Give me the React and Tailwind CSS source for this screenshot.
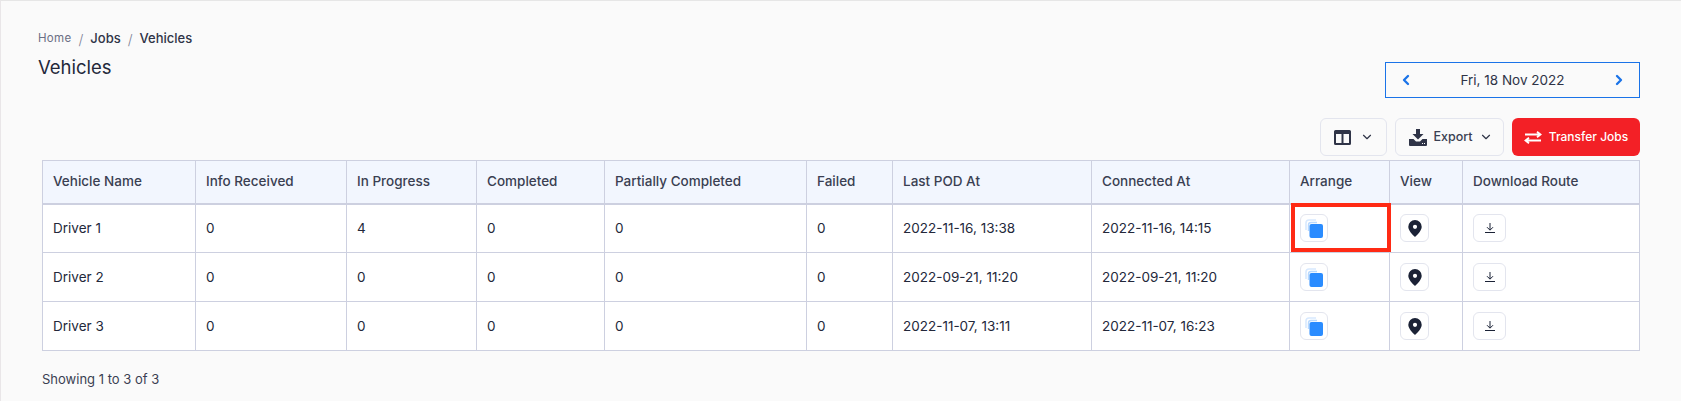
import React from 'react';
import { ChevronLeft, ChevronRight, ChevronDown } from 'lucide-react';

const rows = [
  { name: 'Driver 1', info: 0, progress: 4, completed: 0, partial: 0, failed: 0, pod: '2022-11-16, 13:38', connected: '2022-11-16, 14:15' },
  { name: 'Driver 2', info: 0, progress: 0, completed: 0, partial: 0, failed: 0, pod: '2022-09-21, 11:20', connected: '2022-09-21, 11:20' },
  { name: 'Driver 3', info: 0, progress: 0, completed: 0, partial: 0, failed: 0, pod: '2022-11-07, 13:11', connected: '2022-11-07, 16:23' },
];

const headers = [
  ['Vehicle Name', 'w-[153px]'],
  ['Info Received', 'w-[151px]'],
  ['In Progress', 'w-[130px]'],
  ['Completed', 'w-[128px]'],
  ['Partially Completed', 'w-[202px]'],
  ['Failed', 'w-[86px]'],
  ['Last POD At', 'w-[199px]'],
  ['Connected At', 'w-[198px]'],
  ['Arrange', 'w-[100px]'],
  ['View', 'w-[73px]'],
  ['Download Route', 'w-[177px]'],
];

const ArrangeIcon = () => (
  <svg width="18" height="19" viewBox="0 0 18 19">
    <path d="M1 11V4a3 3 0 0 1 3-3h7" fill="none" stroke="#d8e9fe" strokeWidth="1.6" />
    <path d="M3.500 12V6a2.500 2.500 0 0 1 2.500-2.500h6" fill="none" stroke="#b9d9fd" strokeWidth="1.4" />
    <rect x="4.500" y="5" width="13.500" height="14" rx="2" fill="#2a8cff" />
  </svg>
);

const PinIcon = () => (
  <svg width="14" height="17" viewBox="0 0 14 17">
    <path fillRule="evenodd" d="M7 0a6.700 6.700 0 0 1 6.700 6.700C13.700 10.500 9.500 14.500 7 17 4.500 14.500.3 10.500.3 6.700A6.700 6.700 0 0 1 7 0zm0 4.700a2.100 2.100 0 1 0 0 4.200 2.100 2.100 0 0 0 0-4.200z" fill="#1b2236" />
  </svg>
);

const DownloadIcon = () => (
  <svg width="10" height="10" viewBox="0 0 10 10" fill="none" stroke="#1b2236" strokeWidth="1">
    <path d="M5 0v7M2 4.200 5 7.200l3-3M0 9.500h10" />
  </svg>
);

const ColumnsIcon = () => (
  <svg width="17" height="15" viewBox="0 0 17 15">
    <path fillRule="evenodd" d="M1.500 0h14A1.500 1.500 0 0 1 17 1.500v12a1.500 1.500 0 0 1-1.500 1.500h-14A1.500 1.500 0 0 1 0 13.500v-12A1.500 1.500 0 0 1 1.500 0zM2 4v9h5.500V4zm7.500 0v9H15V4z" fill="#2f3447" />
  </svg>
);

const ExportIcon = () => (
  <svg width="18" height="17" viewBox="0 0 18 17">
    <path d="M7 0h4v5h3.500L9 10.500 3.500 5H7z" fill="#2f3447" />
    <path d="M0 10h4.500L7 12.500h4L13.500 10H18v6a1 1 0 0 1-1 1H1a1 1 0 0 1-1-1z" fill="#2f3447" />
    <path d="M13 14.500h1M15 14.500h1" stroke="#fff" strokeWidth="1" />
  </svg>
);

const TransferIcon = () => (
  <svg width="18" height="13" viewBox="0 0 18 13" fill="none" stroke="#fff" strokeWidth="1.800">
    <path d="M1 3.500h15M13 .8l3.500 2.700L13 6.200M17 9.500H2M5 6.800 1.500 9.500 5 12.200" />
  </svg>
);

const TableButton = ({ className, children }) => (
  <div className={`flex h-[28px] items-center justify-center rounded-md border border-[#e3e5ee] bg-white ${className}`}>
    {children}
  </div>
);

export default function App() {
  return (
    <div className="h-[401px] w-[1681px] overflow-hidden border-l border-t border-l-[#e9e6e8] border-t-[#e6e6e6] bg-[#fafafa] pl-[37px] pr-[41px] pt-[32px] font-['Inter',sans-serif] text-[#1f2433]">
      <div className="flex items-start justify-between">
        <div>
          <div className="flex h-[12px] items-center text-[14px]">
            <span className="text-[11.500px] tracking-[0.3px] text-[#6b6f85]">Home</span>
            <span className="mx-[7px] font-light text-[#7d8196]">/</span>
            <span className="text-[13px] font-medium text-[#2f3447]">Jobs</span>
            <span className="mx-[7px] font-light text-[#7d8196]">/</span>
            <span className="text-[13px] font-medium text-[#2f3447]">Vehicles</span>
          </div>
          <h1 className="mt-[11px] text-[18.500px] font-normal leading-[22px] text-[#23283a]">Vehicles</h1>
        </div>
        <div className="mt-[29px] flex h-[36px] w-[255px] items-center justify-between border border-[#1a73e8] px-[12px] text-[13.500px] text-[#2f3447]">
          <ChevronLeft size={16} strokeWidth={3.500} className="text-[#1a73e8]" />
          <span>Fri, 18 Nov 2022</span>
          <ChevronRight size={16} strokeWidth={3.500} className="text-[#1a73e8]" />
        </div>
      </div>

      <div className="mt-[20px] flex justify-end gap-[8px]">
        <div className="flex h-[38px] w-[67px] items-center justify-between rounded-md border border-[#e3e5ee] bg-[#fafafa] pl-[13px] pr-[12px]">
          <ColumnsIcon />
          <ChevronDown size={14} className="text-[#2f3447]" />
        </div>
        <div className="flex h-[38px] w-[109px] items-center justify-between rounded-md border border-[#e3e5ee] bg-[#fafafa] pl-[13px] pr-[10px] text-[12.500px] font-medium text-[#3a3f52]">
          <ExportIcon />
          <span>Export</span>
          <ChevronDown size={14} className="text-[#2f3447]" />
        </div>
        <div className="flex h-[38px] w-[128px] items-center justify-center gap-[7px] rounded-md bg-[#f32026] text-[12px] font-medium text-white">
          <TransferIcon />
          <span>Transfer Jobs</span>
        </div>
      </div>

      <div className="relative ml-[4px] mt-[4px] w-[1598px]">
        <table className="w-full table-fixed border-collapse text-[13.500px]">
          <thead>
            <tr className="h-[43px] bg-[#f2f6fe]">
              {headers.map(([label, width]) => (
                <th key={label} className={`${width} border border-b-2 border-[#cdd0e0] pb-[1px] pl-[10px] text-left font-medium text-[#3a3f52]`}>
                  {label}
                </th>
              ))}
            </tr>
          </thead>
          <tbody className="bg-white text-[#23283a]">
            {rows.map((row) => (
              <tr key={row.name} className="h-[49px]">
                <td className="border border-[#cdd0e0] pl-[10px]">{row.name}</td>
                <td className="border border-[#cdd0e0] pl-[10px]">{row.info}</td>
                <td className="border border-[#cdd0e0] pl-[10px]">{row.progress}</td>
                <td className="border border-[#cdd0e0] pl-[10px]">{row.completed}</td>
                <td className="border border-[#cdd0e0] pl-[10px]">{row.partial}</td>
                <td className="border border-[#cdd0e0] pl-[10px]">{row.failed}</td>
                <td className="border border-[#cdd0e0] pl-[10px]">{row.pod}</td>
                <td className="border border-[#cdd0e0] pl-[10px]">{row.connected}</td>
                <td className="border border-[#cdd0e0] pl-[10px]">
                  <TableButton className="w-[28px]"><ArrangeIcon /></TableButton>
                </td>
                <td className="border border-[#cdd0e0] pl-[10px]">
                  <TableButton className="w-[29px]"><PinIcon /></TableButton>
                </td>
                <td className="border border-[#cdd0e0] pl-[10px]">
                  <TableButton className="w-[33px]"><DownloadIcon /></TableButton>
                </td>
              </tr>
            ))}
          </tbody>
        </table>
        {/* marker round the first Arrange cell */}
        <div className="absolute left-[1249px] top-[43px] h-[49px] w-[100px] border-[4px] border-[#ff2a14]" />
      </div>

      <div className="mt-[19px] ml-[4px] text-[13px] text-[#3a3f52]">Showing 1 to 3 of 3</div>
    </div>
  );
}
